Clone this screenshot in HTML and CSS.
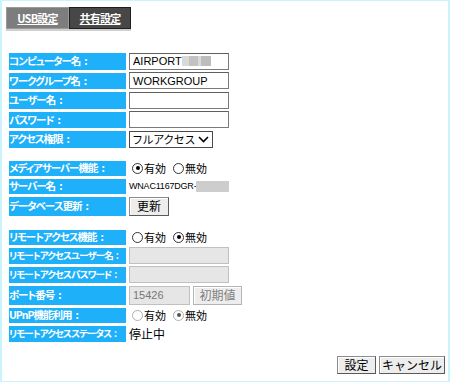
FILE: index.html
```html
<!DOCTYPE html><html lang="ja">
<head>
<meta charset="utf-8">
<title>共有設定</title>
<link rel="stylesheet" href="styles.css">
</head>
<body>
<div class="frame">

  <div class="tabs">
    <a class="tab">USB設定</a><a class="tab active">共有設定</a>
  </div>

  <!-- share settings -->
  <div class="grid sec1">
    <div class="label">コンピューター名<i>:</i></div>
    <div class="cell"><span class="field">AIRPORT<span class="redact mosaic"></span></span></div>
    <div class="label">ワークグループ名<i>:</i></div>
    <div class="cell"><span class="field">WORKGROUP</span></div>
    <div class="label">ユーザー名<i>:</i></div>
    <div class="cell"><span class="field"></span></div>
    <div class="label">パスワード<i>:</i></div>
    <div class="cell"><span class="field"></span></div>
    <div class="label">アクセス権限<i>:</i></div>
    <div class="cell"><span class="select"><span>フルアクセス</span>
      <svg class="chev" viewBox="0 0 11 7" width="11" height="7"><polyline points="1,1 5.5,5.5 10,1" fill="none" stroke="#000" stroke-width="1.6"/></svg>
    </span></div>
  </div>

  <!-- media server -->
  <div class="grid sec2">
    <div class="label">メディアサーバー機能<i>:</i></div>
    <div class="cell radios">
      <span class="radio checked"></span><span class="rtext">有効</span>
      <span class="radio"></span><span class="rtext">無効</span>
    </div>
    <div class="label">サーバー名<i>:</i></div>
    <div class="cell"><span class="plain">WNAC1167DGR-</span><span class="redact flat"></span></div>
    <div class="label">データベース更新<i>:</i></div>
    <div class="cell"><span class="btn">更新</span></div>
  </div>

  <!-- remote access -->
  <div class="grid sec3">
    <div class="label">リモートアクセス機能<i>:</i></div>
    <div class="cell radios">
      <span class="radio"></span><span class="rtext">有効</span>
      <span class="radio checked"></span><span class="rtext">無効</span>
    </div>
    <div class="label small">リモートアクセスユーザー名<i>:</i></div>
    <div class="cell"><span class="field off"></span></div>
    <div class="label small">リモートアクセスパスワード<i>:</i></div>
    <div class="cell"><span class="field off"></span></div>
    <div class="label">ポート番号<i>:</i></div>
    <div class="cell"><span class="field off port">15426</span><span class="btn off">初期値</span></div>
    <div class="label">UPnP機能利用<i>:</i></div>
    <div class="cell radios">
      <span class="radio off"></span><span class="rtext">有効</span>
      <span class="radio off checked"></span><span class="rtext">無効</span>
    </div>
    <div class="label small">リモートアクセスステータス<i>:</i></div>
    <div class="cell"><span class="status">停止中</span></div>
  </div>

  <div class="actions">
    <span class="btn act">設定</span><span class="btn act cancel">キャンセル</span>
  </div>

</div>
</body>
</html>
```

FILE: styles.css
```css
body {
  margin: 0;
  background: #fff;
  font-family: "Noto Sans CJK JP", "Liberation Sans", sans-serif;
}
.frame {
  width: 450px;
  height: 382px;
  box-sizing: border-box;
  border-style: solid;
  border-color: #c9f4fb;
  border-width: 1px 2px;
  padding: 6px 3px 0 4px;
}

/* tabs */
.tabs {
  display: flex;
  width: 125px;
  border-bottom: 2px solid #cfcfcf;
}
.tab {
  height: 22px;
  box-sizing: border-box;
  display: flex;
  align-items: center;
  justify-content: center;
  color: #fff;
  font-size: 11px;
  font-weight: bold;
  text-decoration: underline;
  background: #7d7d7d;
  width: 63px;
  border: 1px solid #9a9a9a;
  letter-spacing: -0.8px;
}
.tab.active {
  width: 62px;
  background: #474747;
  border-color: #1e1e1e;
}

/* form grids */
.grid {
  display: grid;
  grid-template-columns: 117px 1fr;
  column-gap: 3px;
  row-gap: 3px;
  margin-left: 3px;
}
.sec1 {
  margin-top: 22px;
  grid-auto-rows: 16.5px;
}
.sec2 {
  margin-top: 13px;
  grid-template-rows: 15px 15px 19px;
}
.sec3 {
  margin-top: 14px;
  grid-template-rows: 15px 16px 16px 19px 15px 16px;
}
.label {
  background: #1fb0fa;
  color: #fff;
  font-size: 10.5px;
  font-weight: bold;
  line-height: 1;
  display: flex;
  align-items: center;
  white-space: nowrap;
  font-feature-settings: "palt";
  letter-spacing: -1px;
}
.label i {
  font-style: normal;
  margin-left: 4px;
}
.label.small {
  font-size: 9.5px;
  letter-spacing: -0.9px;
}
.label.small i {
  margin-left: 3px;
}
.cell {
  display: flex;
  align-items: center;
  height: 100%;
}

/* inputs */
.field {
  width: 100px;
  height: 100%;
  min-height: 17px;
  box-sizing: border-box;
  border: 1px solid #7a7a7a;
  border-top-color: #5f5f5f;
  background: #fff;
  display: flex;
  align-items: center;
  padding-left: 3px;
  font-family: "Liberation Sans", sans-serif;
  font-size: 11px;
  color: #000;
}
.field.off {
  background: #e6e6e6;
  border-color: #c0c0c0;
  color: #777;
}
.field.port {
  width: 61px;
  height: 19px;
}
.redact {
  display: inline-block;
}
.mosaic {
  width: 29px;
  height: 10px;
  background: linear-gradient(90deg, #d9d9d9 0 7px, #c2c2c2 7px 16px, #dadada 16px 19px, #bdbdbd 19px 29px);
}
.flat {
  width: 33px;
  height: 11px;
  background: #cdcdcd;
}
.plain {
  font-family: "Liberation Sans", sans-serif;
  font-size: 9px;
  letter-spacing: -0.2px;
}
.select {
  width: 84px;
  height: 100%;
  box-sizing: border-box;
  border: 1px solid #4a4a4a;
  display: flex;
  align-items: center;
  justify-content: space-between;
  padding: 0 3px 0 2px;
  font-size: 11px;
  line-height: 1;
  white-space: nowrap;
  letter-spacing: -0.4px;
}
.chev {
  flex: none;
}

/* radios */
.radios {
  font-size: 11px;
}
.radio {
  width: 11px;
  height: 11px;
  box-sizing: border-box;
  border: 1px solid #333;
  border-radius: 50%;
  background: #fff;
  margin: 0 1px 0 3px;
  position: relative;
}
.radio.checked::after {
  content: "";
  position: absolute;
  left: 2.5px;
  top: 2.5px;
  width: 4px;
  height: 4px;
  border-radius: 50%;
  background: #000;
}
.radio.off {
  border-color: #b0b0b0;
}
.radio.off.checked::after {
  background: #555;
}
.rtext {
  margin-right: 4px;
  line-height: 1;
}

/* buttons */
.btn {
  height: 19px;
  box-sizing: border-box;
  display: inline-flex;
  align-items: center;
  justify-content: center;
  border: 1px solid #8c8c8c;
  border-right-color: #5a5a5a;
  border-bottom-color: #5a5a5a;
  background: #ededed;
  box-shadow: inset 1px 1px #fff;
  font-size: 12px;
  line-height: 1;
  padding: 0 7px;
  white-space: nowrap;
}
.btn.off {
  margin-left: 3px;
  color: #808080;
  border-color: #b4b4b4;
  width: 49px;
  padding: 0;
}
.status {
  font-size: 12px;
  line-height: 1;
}

.actions {
  display: flex;
  justify-content: flex-end;
  gap: 3px;
  margin-top: 14px;
}
.btn.act {
  height: 18px;
  width: 39px;
  padding: 0;
}
.btn.cancel {
  width: 66px;
}
```
